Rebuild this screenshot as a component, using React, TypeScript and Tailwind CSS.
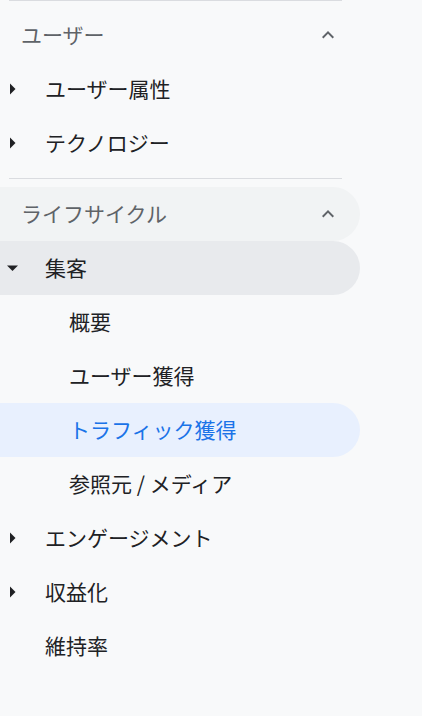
import React from "react";

function Chevron() {
  return (
    <svg width="24" height="24" viewBox="0 0 24 24" className="shrink-0">
      <path d="M7.4 15.4L12 10.8l4.6 4.6L18 14l-6-6-6 6z" fill="#5f6368" />
    </svg>
  );
}

function Caret({ open }: { open?: boolean }) {
  return (
    <svg width="24" height="24" viewBox="0 0 24 24" className="shrink-0">
      {open ? <path d="M7 9.5l5.5 5.5 5.5-5.5z" fill="#202124" /> : <path d="M10 6.5l5.5 5.5-5.5 5.5z" fill="#202124" />}
    </svg>
  );
}

const font = "font-['Noto_Sans_CJK_JP','Noto_Sans',sans-serif]";

function Heading({ label, shaded }: { label: string; shaded?: boolean }) {
  return (
    <div
      className={`flex h-[54px] w-[360px] items-center justify-between rounded-r-full pl-[21px] pr-[20px] text-[21px] text-[#5f6368] ${
        shaded ? "bg-[#f1f3f4]" : ""
      }`}
    >
      <span>{label}</span>
      <Chevron />
    </div>
  );
}

function Item({ label, caret, open, bg }: { label: string; caret?: boolean; open?: boolean; bg?: string }) {
  return (
    <div className={`flex h-[54px] w-[360px] items-center rounded-r-full text-[21px] text-[#202124] ${bg ?? ""}`}>
      <div className="flex w-[45px] items-center">{caret && <Caret open={open} />}</div>
      <span>{label}</span>
    </div>
  );
}

function SubItem({ label, active }: { label: string; active?: boolean }) {
  return (
    <div
      className={`flex h-[54px] w-[360px] items-center rounded-r-full pl-[69px] text-[21px] ${
        active ? "bg-[#e8f0fe] text-[#1a73e8]" : "text-[#202124]"
      }`}
    >
      {label}
    </div>
  );
}

function Divider() {
  return <div className="mx-[9px] my-2 h-px w-[333px] bg-[#dadce0]" />;
}

export default function App() {
  return (
    <div className={`min-h-[716px] w-[422px] bg-[#f8f9fa] ${font}`}>
      <div className="ml-[9px] h-px w-[333px] bg-[#dadce0]" />
      <div className="pt-[7px]">
        <Heading label="ユーザー" />
        <Item label="ユーザー属性" caret />
        <Item label="テクノロジー" caret />
      </div>
      <Divider />
      <Heading label="ライフサイクル" shaded />
      <Item label="集客" caret open bg="bg-[#e8eaed]" />
      <SubItem label="概要" />
      <SubItem label="ユーザー獲得" />
      <SubItem label="トラフィック獲得" active />
      <SubItem label="参照元 / メディア" />
      <Item label="エンゲージメント" caret />
      <Item label="収益化" caret />
      <Item label="維持率" />
    </div>
  );
}
